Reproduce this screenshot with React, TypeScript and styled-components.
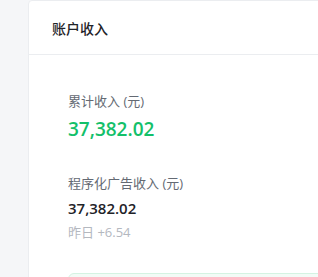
import styled, { createGlobalStyle } from 'styled-components';

const GlobalStyle = createGlobalStyle`
	html, body {
		margin: 0;
		padding: 0;
		background: #f5f6f8;
		font-family: 'Open Sans', 'Noto Sans CJK SC', sans-serif;
	}
	* {
		box-sizing: border-box;
	}
`;

const Page = styled.div`
	width: 318px;
	height: 277px;
	overflow: hidden;
	padding-left: 28px;
`;

const Card = styled.div`
	width: 320px;
	height: 300px;
	background: #fff;
	border: 1px solid #ebedf0;
	border-radius: 4px;
`;

const Header = styled.div`
	height: 54px;
	padding: 0 0 0 23px;
	display: flex;
	align-items: center;
	border-bottom: 1px solid #ebedf0;
	font-size: 14px;
	color: #1f2329;
	font-weight: 500;
`;

const Body = styled.div`
	padding: 37px 0 0 39px;
`;

const Label = styled.div`
	font-size: 13px;
	color: #646a73;
	line-height: 18px;
`;

const Amount = styled.div<{ $big?: boolean }>`
	font-size: ${(p) => (p.$big ? '19px' : '15px')};
	font-weight: 600;
	color: ${(p) => (p.$big ? '#13c06a' : '#1f2329')};
	line-height: ${(p) => (p.$big ? '26px' : '20px')};
	margin-top: ${(p) => (p.$big ? '6px' : '6px')};
`;

const Block = styled.div<{ $gap?: number }>`
	margin-top: ${(p) => p.$gap ?? 0}px;
`;

const Sub = styled.div`
	font-size: 13px;
	color: #b4b8bf;
	line-height: 18px;
	margin-top: 5px;
`;

const Notice = styled.div`
	margin-top: 32px;
	height: 40px;
	background: #f2fbf6;
	border: 1px solid #d4f3e2;
	border-radius: 6px;
`;

function App() {
	return (
		<Page>
			<GlobalStyle />
			<Card>
				<Header>账户收入</Header>
				<Body>
					<Block>
						<Label>累计收入 (元)</Label>
						<Amount $big>37,382.02</Amount>
					</Block>
					<Block $gap={32}>
						<Label>程序化广告收入 (元)</Label>
						<Amount>37,382.02</Amount>
						<Sub>昨日 +6.54</Sub>
					</Block>
					<Notice />
				</Body>
			</Card>
		</Page>
	);
}

export default App;
